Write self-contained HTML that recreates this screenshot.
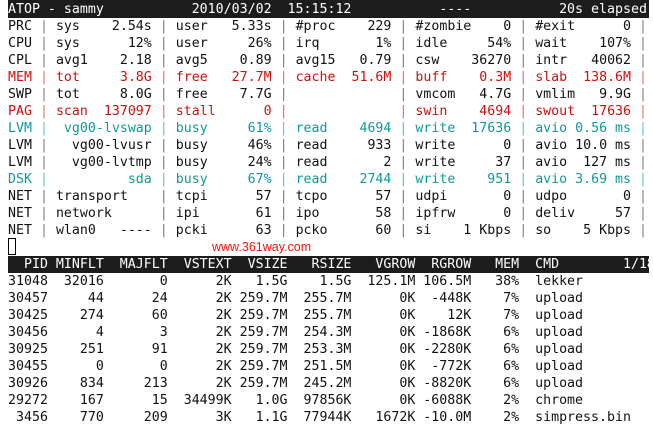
<!DOCTYPE html>
<html><head><meta charset="utf-8"><style>
html,body{margin:0;padding:0;background:#fff;width:653px;height:426px;overflow:hidden}
.t{position:absolute;left:8px;top:1px;font-family:"DejaVu Sans Mono","Liberation Mono",monospace;font-size:13.27px;line-height:17px;white-space:pre;color:#111;margin:0}
.t>div{height:17px}
.bar{background:#1c1c1c;color:#fff;width:641px}
.p{color:#808080}
.r{color:#cc1111}.r .p{color:#e07070}
.c{color:#119999}.c .p{color:#66c4c4}
.cur{position:absolute;left:8px;top:238px;width:8px;height:17px;border:1px solid #000;box-sizing:border-box}
.wm{position:absolute;left:212px;top:240px;font-family:"Liberation Sans",sans-serif;font-size:12.5px;color:#ff1010}
</style></head><body>
<div class="t"><div class="bar" style="margin-top:-1px;height:18px;line-height:19px">ATOP - sammy           2010/03/02  15:15:12           ----           20s elapsed</div><div>PRC <span class="p">|</span> sys    2.54s <span class="p">|</span> user   5.33s <span class="p">|</span> #proc    229 <span class="p">|</span> #zombie    0 <span class="p">|</span> #exit      0 <span class="p">|</span></div><div>CPU <span class="p">|</span> sys      12% <span class="p">|</span> user     26% <span class="p">|</span> irq       1% <span class="p">|</span> idle     54% <span class="p">|</span> wait    107% <span class="p">|</span></div><div>CPL <span class="p">|</span> avg1    2.18 <span class="p">|</span> avg5    0.89 <span class="p">|</span> avg15   0.79 <span class="p">|</span> csw    36270 <span class="p">|</span> intr   40062 <span class="p">|</span></div><div class="r">MEM <span class="p">|</span> tot     3.8G <span class="p">|</span> free   27.7M <span class="p">|</span> cache  51.6M <span class="p">|</span> buff    0.3M <span class="p">|</span> slab  138.6M <span class="p">|</span></div><div>SWP <span class="p">|</span> tot     8.0G <span class="p">|</span> free    7.7G <span class="p">|</span>              <span class="p">|</span> vmcom   4.7G <span class="p">|</span> vmlim   9.9G <span class="p">|</span></div><div class="r">PAG <span class="p">|</span> scan  137097 <span class="p">|</span> stall      0 <span class="p">|</span>              <span class="p">|</span> swin    4694 <span class="p">|</span> swout  17636 <span class="p">|</span></div><div class="c">LVM <span class="p">|</span>  vg00-lvswap <span class="p">|</span> busy     61% <span class="p">|</span> read    4694 <span class="p">|</span> write  17636 <span class="p">|</span> avio 0.56 ms <span class="p">|</span></div><div>LVM <span class="p">|</span>   vg00-lvusr <span class="p">|</span> busy     46% <span class="p">|</span> read     933 <span class="p">|</span> write      0 <span class="p">|</span> avio 10.0 ms <span class="p">|</span></div><div>LVM <span class="p">|</span>   vg00-lvtmp <span class="p">|</span> busy     24% <span class="p">|</span> read       2 <span class="p">|</span> write     37 <span class="p">|</span> avio  127 ms <span class="p">|</span></div><div class="c">DSK <span class="p">|</span>          sda <span class="p">|</span> busy     67% <span class="p">|</span> read    2744 <span class="p">|</span> write    951 <span class="p">|</span> avio 3.69 ms <span class="p">|</span></div><div>NET <span class="p">|</span> transport    <span class="p">|</span> tcpi      57 <span class="p">|</span> tcpo      57 <span class="p">|</span> udpi       0 <span class="p">|</span> udpo       0 <span class="p">|</span></div><div>NET <span class="p">|</span> network      <span class="p">|</span> ipi       61 <span class="p">|</span> ipo       58 <span class="p">|</span> ipfrw      0 <span class="p">|</span> deliv     57 <span class="p">|</span></div><div>NET <span class="p">|</span> wlan0   ---- <span class="p">|</span> pcki      63 <span class="p">|</span> pcko      60 <span class="p">|</span> si    1 Kbps <span class="p">|</span> so    5 Kbps <span class="p">|</span></div><div> </div><div class="bar">  PID MINFLT  MAJFLT  VSTEXT  VSIZE   RSIZE   VGROW  RGROW   MEM  CMD        1/18</div><div>31048  32016       0      2K   1.5G    1.5G  125.1M 106.5M   38%  lekker</div><div>30457     44      24      2K 259.7M  255.7M      0K  -448K    7%  upload</div><div>30425    274      60      2K 259.7M  255.7M      0K    12K    7%  upload</div><div>30456      4       3      2K 259.7M  254.3M      0K -1868K    6%  upload</div><div>30925    251      91      2K 259.7M  253.3M      0K -2280K    6%  upload</div><div>30455      0       0      2K 259.7M  251.5M      0K  -772K    6%  upload</div><div>30926    834     213      2K 259.7M  245.2M      0K -8820K    6%  upload</div><div>29272    167      15  34499K   1.0G  97856K      0K -6088K    2%  chrome</div><div> 3456    770     209      3K   1.1G  77944K   1672K -10.0M    2%  simpress.bin</div></div>
<div class="cur"></div>
<div class="wm">www.361way.com</div>
</body></html>
